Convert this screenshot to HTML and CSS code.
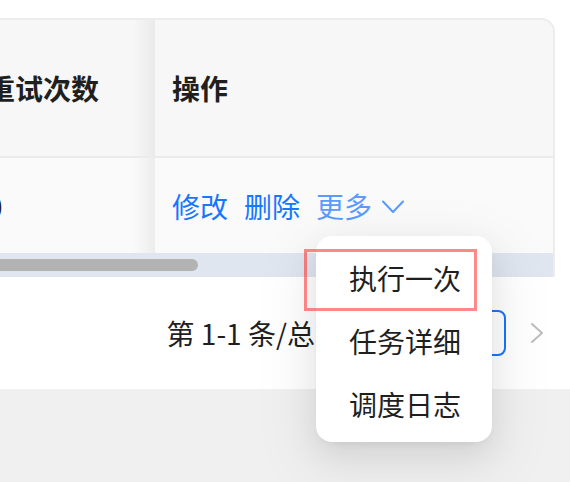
FILE: index.html
```html
<!DOCTYPE html>
<html lang="zh-CN">
<head>
<meta charset="utf-8">
<title>任务列表</title>
<link rel="stylesheet" href="styles.css">
</head>
<body>
<div class="page">
  <div class="top">
    <div class="card">
      <div class="thead">
        <div class="cell cell-left"><span class="shift">重试次数</span></div>
        <div class="cell cell-right">操作</div>
      </div>
      <div class="trow">
        <div class="cell cell-left"><span class="shift">0</span></div>
        <div class="cell cell-right actions">
          <a class="link">修改</a>
          <a class="link">删除</a>
          <a class="link more">更多<svg class="chev" viewBox="0 0 22 14" width="22" height="14"><path d="M1 1.5 L11 12 L21 1.5" fill="none" stroke="currentColor" stroke-width="2" stroke-linecap="round" stroke-linejoin="round"/></svg></a>
        </div>
      </div>
      <div class="scrollbar"><div class="thumb"></div></div>
    </div>
    <div class="pagination">
      <span class="total">第 1-1 条/总共 1 条</span>
      <span class="page-item active">1</span>
      <span class="page-next"><svg viewBox="0 0 14 22" width="14" height="22"><path d="M2 2 L12 11 L2 20" fill="none" stroke="currentColor" stroke-width="2" stroke-linecap="round" stroke-linejoin="round"/></svg></span>
    </div>
  </div>
  <div class="footer"></div>

  <div class="dropdown">
    <div class="menu-item">执行一次</div>
    <div class="menu-item">任务详细</div>
    <div class="menu-item">调度日志</div>
  </div>
  <div class="annot"></div>
</div>
</body>
</html>
```

FILE: styles.css
```css
* { box-sizing: border-box; }
html, body { margin: 0; padding: 0; }
body {
  width: 570px;
  height: 482px;
  overflow: hidden;
  font-family: "Noto Sans CJK SC", "Noto Sans", sans-serif;
  color: #1f1f1f;
  background: #f0f0f0;
}
.page {
  position: relative;
  width: 570px;
  height: 482px;
  display: flex;
  flex-direction: column;
}
.top {
  background: #ffffff;
  padding-top: 18px;
}
.card {
  margin-right: 15px;
  border-top: 2px solid #ececec;
  border-right: 2px solid #ececec;
  border-top-right-radius: 14px;
  overflow: hidden;
}
.thead, .trow {
  display: flex;
}
.thead {
  height: 138px;
  background: #f7f7f7;
  border-bottom: 2px solid #ebebeb;
  font-weight: 700;
}
.trow {
  height: 95px;
  background: #fafafa;
}
.cell {
  display: flex;
  align-items: center;
  font-size: 28px;
  line-height: 1;
}
.cell-left {
  width: 155px;
  overflow: hidden;
  position: relative;
  white-space: nowrap;
}
.cell-left::after {
  content: "";
  position: absolute;
  top: 0;
  right: 0;
  bottom: 0;
  width: 22px;
  background: linear-gradient(to right, rgba(0,0,0,0), rgba(0,0,0,0.055));
}
.shift {
  margin-left: -13px;
}
.cell-right {
  flex: 1;
  padding-left: 17px;
}
.actions {
  gap: 16px;
}
.link {
  color: #1677ff;
  display: inline-flex;
  align-items: center;
}
.more {
  color: #5a9bff;
  gap: 10px;
}
.chev {
  display: block;
  margin-top: 2px;
}
.scrollbar {
  height: 24px;
  background: #dfe6ef;
  display: flex;
  align-items: center;
}
.thumb {
  margin-left: -10px;
  width: 208px;
  height: 12px;
  border-radius: 6px;
  background: #b3b3b3;
}
.pagination {
  height: 112px;
  display: flex;
  align-items: center;
  justify-content: flex-end;
  padding-right: 10px;
  font-size: 28px;
}
.total {
  margin-right: 61px;
  white-space: nowrap;
}
.page-item {
  width: 46px;
  height: 46px;
  display: flex;
  align-items: center;
  justify-content: center;
  border: 2px solid #1677ff;
  border-radius: 8px;
  color: #1677ff;
  margin-right: 8px;
}
.page-next {
  width: 46px;
  height: 46px;
  display: flex;
  align-items: center;
  justify-content: center;
  color: #bdbdbd;
}
.footer {
  flex: 1;
  background: #f0f0f0;
}
.dropdown {
  position: absolute;
  left: 316px;
  top: 236px;
  width: 176px;
  height: 206px;
  padding: 10px 0 8px;
  background: #ffffff;
  border-radius: 16px;
  box-shadow: 0 12px 32px rgba(0,0,0,0.08), 0 6px 12px -8px rgba(0,0,0,0.12), 0 18px 56px 16px rgba(0,0,0,0.05);
}
.menu-item {
  height: 63px;
  display: flex;
  align-items: center;
  padding-left: 33px;
  font-size: 28px;
  line-height: 1;
  color: #1f1f1f;
}
.annot {
  position: absolute;
  left: 304px;
  top: 249px;
  width: 173px;
  height: 62px;
  border: 3px solid rgba(255, 50, 50, 0.58);
}
```
